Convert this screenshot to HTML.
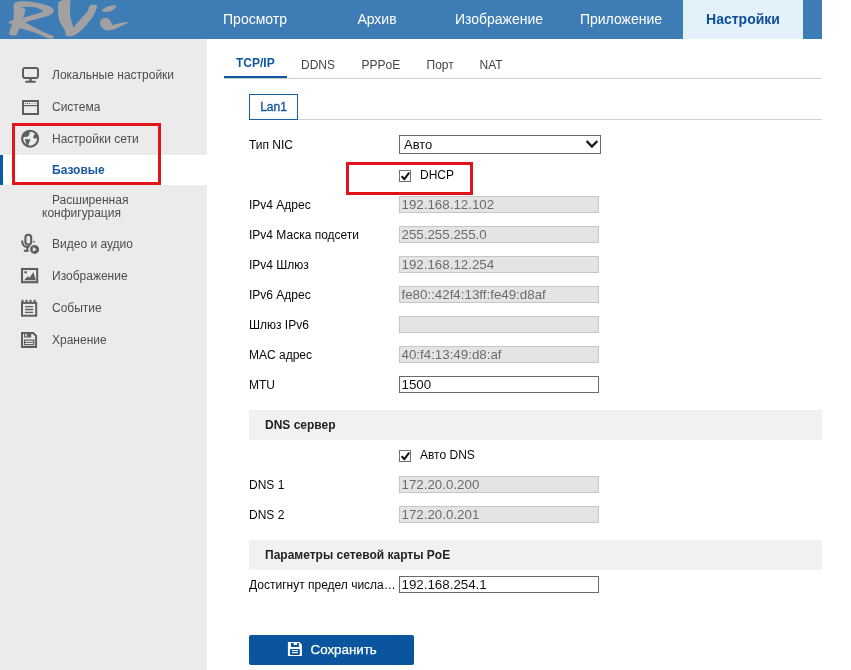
<!DOCTYPE html>
<html><head><meta charset="utf-8">
<style>
*{margin:0;padding:0;box-sizing:border-box}
html,body{width:851px;height:670px;overflow:hidden;background:#fff;font-family:"Liberation Sans",sans-serif;position:relative}
body{-webkit-font-smoothing:antialiased;filter:grayscale(0.001)}
.a{position:absolute;white-space:nowrap}
#hdr{position:absolute;left:0;top:0;width:822px;height:39px;background:#3e7cb6}
.nav{position:absolute;top:0;height:39px;line-height:39px;font-size:14px;color:#fff;text-align:center;width:120px}
.nav.act{background:#e3f1fb;color:#0e4f97;font-weight:bold}
#side{position:absolute;left:0;top:39px;width:207px;height:631px;background:#ebebeb}
.si{position:absolute;left:52px;font-size:12px;color:#4e4e4e;line-height:14px}
.ico{position:absolute}
.tab{position:absolute;font-size:12px;color:#444;line-height:14px}
.lbl{position:absolute;left:249px;font-size:12px;color:#080808;line-height:14px}
.inp{position:absolute;left:399px;width:200px;height:17px;background:#e4e4e4;border:1px solid #c6c6c6;font-size:13.33px;color:#6c6c6c;line-height:16px;padding-left:1.5px}
.inp.w{background:#fff;border:1px solid #6b6b6b;color:#111}
.sec{position:absolute;left:249px;width:573px;height:30px;background:#f1f1f1}
.sec span{position:absolute;left:16px;top:8px;font-size:12px;font-weight:bold;color:#222;line-height:14px}
.cb{position:absolute;left:399px;width:12px;height:12px;border:1px solid #707070;background:#fff}
.red{position:absolute;border:3px solid #e3131d}
</style></head><body>
<div id="hdr">
  <svg class="a" style="left:0;top:0" width="140" height="39" viewBox="0 0 140 39">
    <g fill="#a1a1a1">
      <!-- R -->
      <path d="M13.5,5.3 C14,3 15,2.3 17,1.8 C20,1.2 23,1 26,1.2 C32,1.6 41,3.2 47.3,5.6 C51,7 53.7,8.5 53.7,10.5 C53.5,12.5 52.5,13.8 50,15 C48,16 46,16.5 44.5,16.9 L33.2,20.1 L25,22.5 C28,24 31,25.5 33.2,26.8 L44.5,32.4 C48,34 51,35 53,35.8 C53.8,36.5 53.8,38 53,38.4 L48.7,38.4 C44,36.5 39,34.5 34.6,32.4 L19.5,27.9 C18.5,30.5 17.3,33.5 16.3,35.3 C14,35.8 11.5,35.5 9.9,34.9 C9.2,34.3 9.1,33 9.4,32 C10.2,29.3 11.2,26.5 12,24 C10.5,23.8 9,23.7 8.6,23.1 C8.3,22.3 8.7,21.7 9.5,21.3 C11,20.7 12.3,20.2 13.5,19.7 C13.7,16.5 13.9,13.5 13.8,10.6 C13.6,8.5 13.3,6.8 13.5,5.3 Z M19.1,8.1 C20.5,7.8 22,7.6 23.3,7.8 C24.6,8.2 25.4,9.2 25.4,10.6 C25,13 24,15.5 23,17.6 C26.5,16.7 30,15.7 33.2,14.8 C37,13.7 40.5,12.5 43.4,11.3 C41.5,9.8 39,8.5 36.7,7.8 C33,6.9 29,6.6 26.2,6.7 C23.5,6.9 21,7.4 19.1,8.1 Z" fill-rule="evenodd"/>
      <!-- V -->
      <path d="M58.5,2 C61,0 66,-0.5 70.5,0 C70,6 69.5,12 70.5,18 C71.5,22 72.5,25 73.5,27.5 C78,22 83,16 87.5,11.5 C88.5,8 89,5.5 91,5 C93,4.5 96,4.5 97.5,5.5 C96,10 94.5,14 92,18 C88,23 84,28 80.5,31 C77,34 74,36 71,36.5 C68,36.5 65.5,36 65.5,34.5 C65.5,33 65,31 64.5,29.5 C61,25 59,21 58.5,17 C58,12 57.5,6 58.5,2 Z"/>
      <!-- i dot -->
      <path d="M102.1,10.1 C103.5,8.5 105.5,7.3 107.9,6.6 C110.5,5.8 113,5.3 115.8,5.3 C116.2,6.2 116,7 115.4,7.5 C114.5,9 113,10.3 111.4,11 C109,11.8 106.5,12 104.3,11.9 C103,11.7 102.2,11 102.1,10.1 Z"/>
      <!-- i body -->
      <path d="M100,22.9 C100,20.5 102,18.3 104.3,18.1 C106.8,17.9 108.8,18.6 109.6,19.8 C110.8,21.5 111.5,23.5 112.7,25.1 C117,24 122,22.5 127.2,22 C128,22.3 128,23 127.7,23.3 C124,25 120,26.8 116.7,28.2 C113.5,29.5 110.5,30.3 107.9,30.4 C105,30.4 103,29.2 101.7,27.3 C100.6,25.8 100,24.5 100,22.9 Z"/>
    </g>
  </svg>
  <div class="nav" style="left:195px">Просмотр</div>
  <div class="nav" style="left:317px">Архив</div>
  <div class="nav" style="left:439px">Изображение</div>
  <div class="nav" style="left:561px">Приложение</div>
  <div class="nav act" style="left:683px">Настройки</div>
</div>

<div id="side">
  <div style="position:absolute;left:0;top:116px;width:207px;height:30px;background:#fff"></div>
  <div style="position:absolute;left:0;top:116px;width:3px;height:30px;background:#0b59a6"></div>
</div>
<svg class="a" style="left:0;top:0" width="207" height="670" viewBox="0 0 207 670">
 <g fill="none" stroke="#5e5e5e" stroke-width="2">
  <!-- monitor -->
  <rect x="23" y="68" width="15" height="10" rx="2"/>
  <path d="M30.5,79 V81" stroke-width="2.4"/>
  <path d="M26,81.8 H35" stroke-width="1.9" stroke-linecap="round"/>
  <!-- window -->
  <rect x="23" y="101" width="15" height="13"/>
  <path d="M24,105.6 H37" stroke-width="1.2"/>
  <path d="M30.8,103.4 H37" stroke-width="0.6" stroke="#a8a8a8"/>
  <!-- globe ring -->
  <circle cx="30.1" cy="138.7" r="8" stroke-width="2.1"/>
  <!-- mic -->
  <rect x="25.4" y="234.8" width="5.8" height="9.8" rx="2.9" stroke-width="2.1"/>
  <path d="M22.2,240.5 C22.2,245 24.5,247 27.5,247 C29,247 30.3,246.5 31,246" />
  <path d="M27.3,247 V250.5"/>
  <path d="M23.8,250.8 H28.6"/>
  <!-- image -->
  <rect x="22" y="269" width="15.2" height="13.2" stroke-width="2.1"/>
  <!-- event -->
  <rect x="22" y="302.9" width="14.2" height="12.8" stroke-width="2"/>
  <path d="M25,306.6 H33.2 M25,309.5 H33.2 M25,312.4 H33.2" stroke-width="1.3"/>
  <!-- floppy -->
  <path d="M22,333 H33.2 L36.1,336 V347 H22 Z" stroke-width="2"/>
  <rect x="24.5" y="340.1" width="9.3" height="4.6" stroke-width="1.2"/>
  <path d="M24.5,342.4 H33.8" stroke-width="1"/>
 </g>
 <g fill="#5e5e5e">
  <circle cx="25.5" cy="103.4" r="0.65"/><circle cx="27.5" cy="103.4" r="0.65"/><circle cx="29.5" cy="103.4" r="0.65"/>
  <!-- globe continents -->
  <path d="M22.5,134 C23.5,132.5 25,131.2 27,130.8 L29.6,131.6 C29.9,132.5 29.8,133.5 29.3,134.5 C28.8,135.5 28.2,136.3 27.5,136.8 C26.8,137 26.2,137 25.5,136.7 C24.8,136.5 24,137 23.5,137.5 L22.3,137.5 Z"/>
  <path d="M25,139 L30.5,139.4 C30.2,140.5 29.7,141.3 29.3,142.1 C28.9,143.2 28.5,144.5 28.2,146.5 L27.2,146.5 C26.5,145 26,143.5 25.6,141.8 Z"/>
  <path d="M34.3,134.2 L36.8,133.8 C37.8,135.2 38.3,136.5 38.4,137.6 C37.3,138.3 36,138.6 34.8,138.5 C33.8,138.3 33.1,137.9 33,137.5 C33.5,136.4 34,135.3 34.3,134.2 Z"/>
  <!-- mic dot -->
  <circle cx="33.9" cy="241.7" r="0.9"/>
  <!-- play circle -->
  <circle cx="34.6" cy="249.4" r="4.5"/>
  <!-- image sun + mountains -->
  <circle cx="25.6" cy="272.3" r="1.3"/>
  <path d="M24,280.3 L27.8,276.2 L29.6,277.8 L33.4,272 L35.9,280.3 Z"/>
  <!-- event teeth -->
  <rect x="21.5" y="299.8" width="2" height="3"/><rect x="25.5" y="299.8" width="2" height="3"/><rect x="29.5" y="299.8" width="2" height="3"/><rect x="33.6" y="299.8" width="2" height="3"/>
  <!-- floppy shutter -->
  <path d="M24,333 H31.2 V337.6 H24 Z M25.2,334 V336.6 H26.8 V334 Z" fill-rule="evenodd"/>
 </g>
 <path d="M32.8,247.1 L32.8,251.7 L36.7,249.4 Z" fill="#ebebeb"/>
 <circle cx="34.6" cy="249.4" r="5.3" fill="none" stroke="#ebebeb" stroke-width="1"/>
</svg>
<div class="si" style="top:68px">Локальные настройки</div>
<div class="si" style="top:100px">Система</div>
<div class="si" style="top:132px">Настройки сети</div>
<div class="si" style="top:163px;font-weight:bold;color:#1858a0">Базовые</div>
<div class="si" style="top:193px">Расширенная</div>
<div class="si" style="top:206px;left:42px">конфигурация</div>
<div class="si" style="top:237px">Видео и аудио</div>
<div class="si" style="top:269px">Изображение</div>
<div class="si" style="top:301px">Событие</div>
<div class="si" style="top:333px">Хранение</div>
<div class="red" style="left:12px;top:123px;width:149px;height:62px"></div>

<!-- tabs -->
<div class="tab" style="left:236px;top:56px;font-weight:bold;color:#0f56a0">TCP/IP</div>
<div class="tab" style="left:301px;top:58px">DDNS</div>
<div class="tab" style="left:361.5px;top:58px">PPPoE</div>
<div class="tab" style="left:426.5px;top:58px">Порт</div>
<div class="tab" style="left:479.5px;top:58px">NAT</div>
<div class="a" style="left:224px;top:78px;width:598px;height:1px;background:#cfcfcf"></div>
<div class="a" style="left:224px;top:76px;width:63px;height:2px;background:#0f56a0"></div>

<div class="a" style="left:249px;top:94px;width:49px;height:26px;border:1px solid #1a5ea6;font-size:12px;color:#1556a0;line-height:24px;text-align:center;-webkit-text-stroke:0.35px #1556a0">Lan1</div>
<div class="a" style="left:298px;top:119px;width:524px;height:1px;background:#cfcfcf"></div>

<div class="lbl" style="top:138px">Тип NIC</div>
<div class="a" style="left:399px;top:135px;width:202px;height:19px;border:1px solid #6b6b6b;background:#fff;font-size:13px;color:#111;line-height:17px;padding-left:4px">Авто
  <svg class="a" style="left:185.5px;top:4px" width="12" height="9" viewBox="0 0 12 9"><path d="M0.6,1 L5.9,6.6 L11.3,1" fill="none" stroke="#1a1a1a" stroke-width="2.3"/></svg>
</div>
<div class="cb" style="top:170px"><svg class="a" style="left:0;top:-1px" width="12" height="12" viewBox="0 0 12 12"><path d="M1.6,6.2 L4.3,9.2 L9.2,2.6" fill="none" stroke="#111" stroke-width="2"/></svg></div>
<div class="lbl" style="left:420px;top:168px">DHCP</div>
<div class="red" style="left:346px;top:162px;width:127px;height:33px"></div>

<div class="lbl" style="top:198px">IPv4 Адрес</div>
<div class="inp" style="top:196px">192.168.12.102</div>
<div class="lbl" style="top:228px">IPv4 Маска подсети</div>
<div class="inp" style="top:226px">255.255.255.0</div>
<div class="lbl" style="top:258px">IPv4 Шлюз</div>
<div class="inp" style="top:256px">192.168.12.254</div>
<div class="lbl" style="top:288px">IPv6 Адрес</div>
<div class="inp" style="top:286px">fe80::42f4:13ff:fe49:d8af</div>
<div class="lbl" style="top:318px">Шлюз IPv6</div>
<div class="inp" style="top:316px"></div>
<div class="lbl" style="top:348px">MAC адрес</div>
<div class="inp" style="top:346px">40:f4:13:49:d8:af</div>
<div class="lbl" style="top:378px">MTU</div>
<div class="inp w" style="top:376px">1500</div>

<div class="sec" style="top:410px"><span>DNS сервер</span></div>
<div class="cb" style="top:450px"><svg class="a" style="left:0;top:-1px" width="12" height="12" viewBox="0 0 12 12"><path d="M1.6,6.2 L4.3,9.2 L9.2,2.6" fill="none" stroke="#111" stroke-width="2"/></svg></div>
<div class="lbl" style="left:420px;top:448px">Авто DNS</div>
<div class="lbl" style="top:478px">DNS 1</div>
<div class="inp" style="top:476px">172.20.0.200</div>
<div class="lbl" style="top:508px">DNS 2</div>
<div class="inp" style="top:506px">172.20.0.201</div>

<div class="sec" style="top:540px"><span>Параметры сетевой карты PoE</span></div>
<div class="lbl" style="top:578px">Достигнут предел числа…</div>
<div class="inp w" style="top:576px">192.168.254.1</div>

<div class="a" style="left:249px;top:635px;width:165px;height:30px;background:#0a559d;border-radius:2px"></div>
<svg class="a" style="left:280px;top:636px" width="28" height="26" viewBox="280 636 28 26">
  <path d="M287.9,641.9 H299.4 L301.9,644.6 V655.9 H287.9 Z" fill="#fff"/>
  <path d="M291,642.9 H298.9 V646.9 H291 Z M293.7,642.9 V645.1 H297.1 V642.9 Z" fill="#0a559d" fill-rule="evenodd"/>
  <rect x="289.9" y="648.9" width="10" height="6" rx="0.8" fill="#0a559d"/>
  <rect x="291.9" y="650" width="6.2" height="1.1" fill="#fff"/>
  <rect x="291.9" y="652.1" width="6.2" height="1.1" fill="#fff"/>
</svg>
<div class="a" style="left:310.5px;top:641.5px;font-size:13.33px;color:#fff;line-height:15px;-webkit-text-stroke:0.25px #fff">Сохранить</div>
</body></html>
